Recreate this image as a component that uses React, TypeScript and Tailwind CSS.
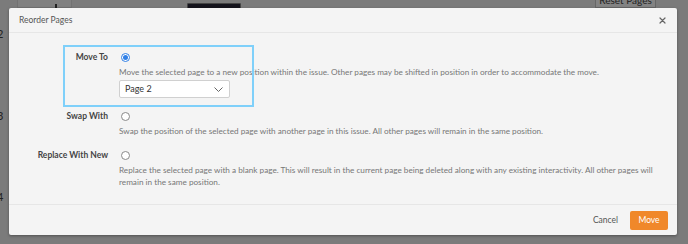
import React from "react";

function Radio({ checked }: { checked?: boolean }) {
  return checked ? (
    <span className="ml-[2px] flex h-[9px] w-[9px] items-center justify-center rounded-full border border-[#2f7fe6] bg-white">
      <span className="h-[5px] w-[5px] rounded-full bg-[#2f7fe6]" />
    </span>
  ) : (
    <span className="ml-[2px] h-[9px] w-[9px] rounded-full border border-[#8a8a8a] bg-white" />
  );
}

function Row({
  label,
  checked,
  children,
}: {
  label: string;
  checked?: boolean;
  children: React.ReactNode;
}) {
  return (
    <div className="flex gap-[11px]">
      <div className="w-[99px] shrink-0 text-right font-bold text-[#444] leading-[12px]">{label}</div>
      <div className="flex w-[546px] flex-col">
        <div className="flex h-[12px] items-center">
          <Radio checked={checked} />
        </div>
        <div className="mt-[3px] text-[8.2px] leading-[12px] text-[#777]">{children}</div>
      </div>
    </div>
  );
}

export default function App() {
  return (
    <div
      className="relative h-[244px] w-[688px] overflow-hidden bg-[#7b7b7b] text-[8.5px]"
      style={{ fontFamily: "Lato, 'Open Sans', sans-serif" }}
    >
      {/* background page bits under overlay */}
      <div className="absolute left-[17px] top-[-4px] h-[12px] w-[55px] border border-[#727272] bg-[#808080]">
        <div className="absolute left-[37px] top-[7px] h-[6px] w-[2px] bg-[#222]" />
      </div>
      <div className="absolute left-[187px] top-[3px] h-[6px] w-[54px] rounded-[1px] border border-[#444] bg-[#15141d]" />
      <div className="absolute left-[595px] top-[-8px] flex h-[16px] w-[61px] items-center justify-center border border-[#666] bg-[#838383] text-[10px] text-[#222]">
        Reset Pages
      </div>
      <div className="absolute left-[-3px] top-[26px] text-[11px] text-[#222]">2</div>
      <div className="absolute left-[-3px] top-[108px] text-[11px] text-[#222]">3</div>
      <div className="absolute left-[-3px] top-[189px] text-[11px] text-[#222]">4</div>

      {/* modal */}
      <div className="absolute left-[9px] top-[8px] flex h-[227px] w-[668px] flex-col rounded-[2px] bg-[#f4f4f4] shadow-[0_1px_3px_rgba(0,0,0,0.35)]">
        <div className="flex h-[25px] shrink-0 items-center justify-between border-b border-[#e6e6e6] pl-[10px] pr-[10px]">
          <span className="text-[#555]">Reorder Pages</span>
          <svg width="7" height="7" viewBox="0 0 7 7" className="mr-[1px]">
            <path d="M1 1 L6 6 M6 1 L1 6" stroke="#666" strokeWidth="1.2" strokeLinecap="round" />
          </svg>
        </div>

        <div className="relative flex flex-1 flex-col gap-[12px] pt-[18px]">
          <div className="flex flex-col">
            <Row label="Move To" checked>
              Move the selected page to a new position within the issue. Other pages may be shifted in position in order to accommodate the move.
            </Row>
            <div className="ml-[110px] mt-[2px] flex h-[18px] w-[111px] items-center justify-between rounded-[2px] border border-[#d0d0d0] bg-white pl-[5px] pr-[6px] text-[9px] text-[#333]">
              <span>Page 2</span>
              <svg width="9" height="5" viewBox="0 0 9 5">
                <path d="M0.5 0.5 L4.5 4.5 L8.5 0.5" stroke="#666" strokeWidth="1" fill="none" />
              </svg>
            </div>
          </div>
          <Row label="Swap With">
            Swap the position of the selected page with another page in this issue. All other pages will remain in the same position.
          </Row>
          <Row label="Replace With New">
            Replace the selected page with a blank page. This will result in the current page being deleted along with any existing interactivity. All other pages will remain in the same position.
          </Row>

          {/* highlight annotation */}
          <div className="absolute left-[54px] top-[12px] h-[62px] w-[191px] border-[2px] border-[#7fd0fa]" />
        </div>

        <div className="flex h-[31px] shrink-0 items-center justify-end gap-[12px] border-t border-[#e6e6e6] pr-[9px]">
          <span className="text-[#555]">Cancel</span>
          <button className="flex h-[19px] w-[38px] items-center justify-center rounded-[2px] bg-[#f0882a] text-white">
            Move
          </button>
        </div>
      </div>
    </div>
  );
}
